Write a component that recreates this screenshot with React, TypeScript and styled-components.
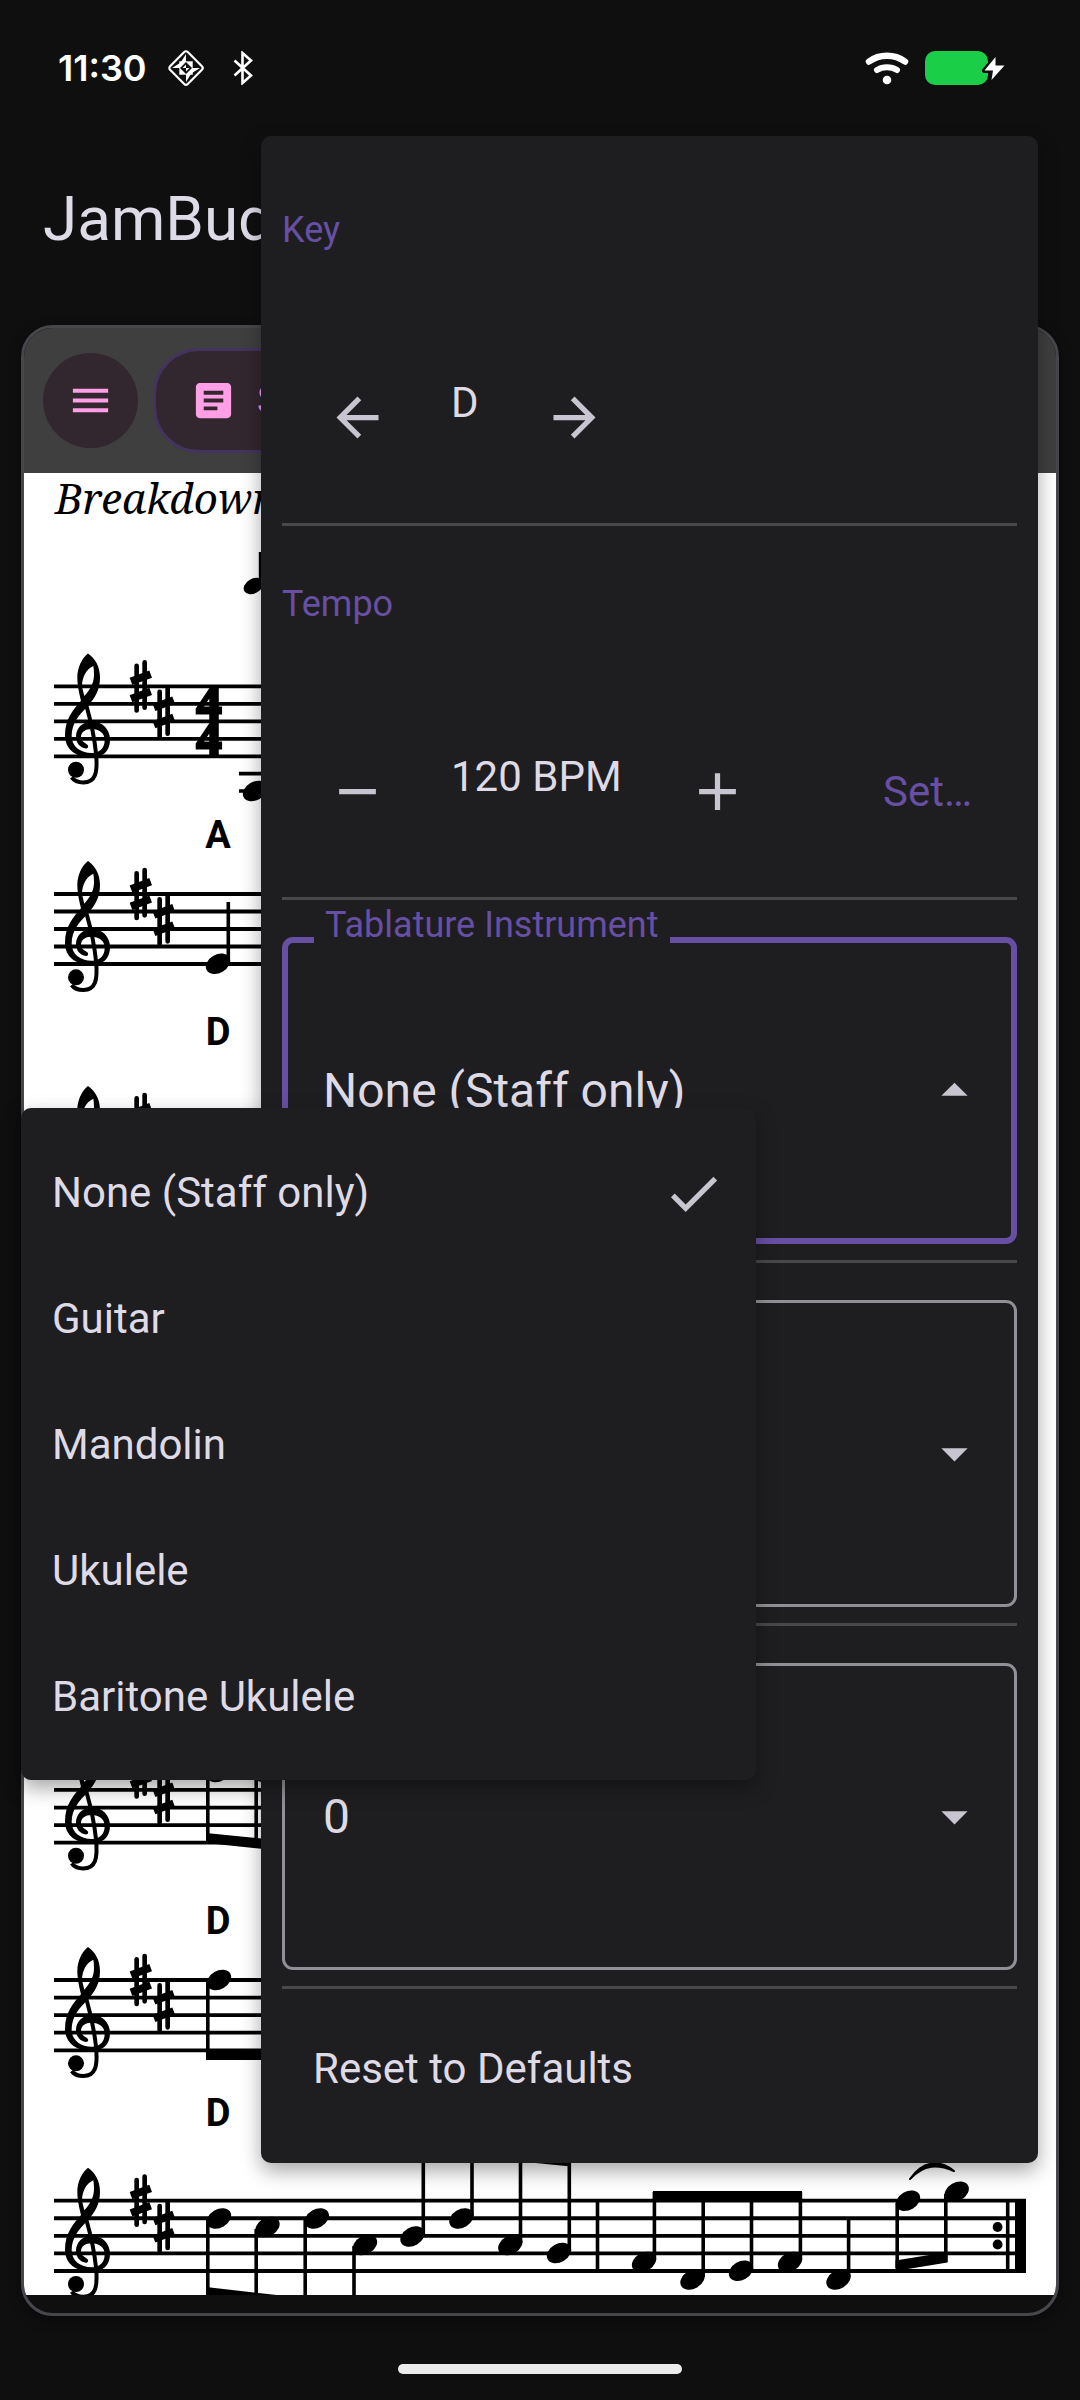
import React from "react";
import styled, { createGlobalStyle } from "styled-components";
import {
  MdAdd,
  MdArrowBack,
  MdArrowDropDown,
  MdArrowDropUp,
  MdArrowForward,
  MdArticle,
  MdCheck,
  MdMenu,
  MdRemove,
} from "react-icons/md";

const c = {
  bg: "#0f0f0f",
  surface: "#1e1e20",
  text: "#dedae6",
  icon: "#c8c5d0",
  primary: "#674fa3",
  divider: "#48484a",
  outline: "#919096",
  cardBorder: "#48464c",
  toolbar: "#3f3f3f",
  tonal: "#32272e",
  pink: "#ff9fe5",
};

const GlobalStyle = createGlobalStyle`
  *, *::before, *::after { box-sizing: border-box; }
  body { margin: 0; background: ${c.bg}; }
  button, select { font: inherit; color: inherit; margin: 0; border: 0; background: none; padding: 0; }
  h1, h2, ul { margin: 0; padding: 0; }
`;

const Screen = styled.div`
  position: relative;
  display: flex;
  flex-direction: column;
  min-height: 100vh;
  overflow: hidden;
  background: ${c.bg};
  color: ${c.text};
  font-family: Roboto, "Noto Sans", sans-serif;
  font-size: 42px;
  line-height: 50px;
`;

const StatusBar = styled.header`
  display: flex;
  align-items: center;
  justify-content: space-between;
  height: 113px;
  padding: 23px 74px 0 58px;
  color: #fff;
`;

const StatusGroup = styled.div<{ $gap: number }>`
  display: flex;
  align-items: center;
  gap: ${(p) => p.$gap}px;
`;

const Clock = styled.time`
  font-family: Inter, Roboto, sans-serif;
  font-size: 36px;
  font-weight: 600;
  margin-right: -8px;
`;

const AppBar = styled.div`
  display: flex;
  align-items: center;
  height: 212px;
  padding: 0 43px;
`;

const AppTitle = styled.h1`
  font-size: 62px;
  font-weight: 400;
  line-height: 72px;
`;

const Card = styled.main`
  margin: 0 21px;
  border: 3px solid ${c.cardBorder};
  border-radius: 32px;
  overflow: hidden;
  padding-bottom: 18px;
  box-shadow: 0 4px 12px rgba(0, 0, 0, 0.5);
`;

const Toolbar = styled.div`
  display: flex;
  align-items: center;
  gap: 15px;
  height: 145px;
  padding: 0 19px;
  background: ${c.toolbar};
  color: ${c.pink};
`;

const RoundButton = styled.button`
  display: grid;
  place-items: center;
  width: 95px;
  height: 95px;
  border-radius: 50%;
  background: ${c.tonal};
`;

const PillButton = styled.button`
  display: flex;
  align-items: center;
  gap: 20px;
  height: 105px;
  padding: 0 56px 0 34px;
  border: 3px solid #43345f;
  border-radius: 46px;
  background: ${c.tonal};
  font-size: 40px;
`;

const Paper = styled.section`
  height: 1822px;
  overflow: hidden;
  background: #fff;
  color: #000;
`;

const TuneTitle = styled.h2`
  height: 60px;
  padding-left: 31px;
  font-family: "Noto Serif", "DejaVu Serif", serif;
  font-size: 42px;
  font-style: italic;
  font-weight: 400;
  line-height: 50px;
`;

const Score = styled.svg`
  display: block;
`;

const Chord = styled.text`
  font-family: Roboto, sans-serif;
  font-size: 38px;
  font-weight: 700;
  text-anchor: middle;
`;

const Meter = styled.text`
  font-family: "Liberation Serif", serif;
  font-size: 50px;
  font-weight: 700;
  text-anchor: middle;
  stroke: #000;
  stroke-width: 3px;
`;

const HomeIndicator = styled.div`
  width: 284px;
  height: 10px;
  margin: 48px auto 26px;
  border-radius: 5px;
  background: #ebebeb;
`;

const Panel = styled.aside`
  position: absolute;
  top: 136px;
  left: 261px;
  right: 42px;
  padding: 16px 21px;
  border-radius: 10px;
  background: ${c.surface};
  box-shadow: 0 8px 20px rgba(0, 0, 0, 0.35);
`;

const Section = styled.section`
  display: flex;
  flex-direction: column;
  gap: 103px;
  padding: 57px 0 43px;
  border-bottom: 3px solid ${c.divider};
`;

const SectionTitle = styled.h2`
  color: ${c.primary};
  font-size: 36px;
  font-weight: 400;
  line-height: 42px;
`;

const Stepper = styled.div`
  display: flex;
  align-items: center;
  padding: 0 14px 0 12px;
`;

const StepButton = styled.button`
  display: grid;
  place-items: center;
  width: 126px;
  height: 126px;
  color: ${c.icon};
`;

const StepValue = styled.output`
  padding: 0 33px 29px 31px;
  white-space: nowrap;
`;

const TextButton = styled.button`
  height: 126px;
  margin-left: auto;
  padding: 2px 31px 0;
  color: ${c.primary};
`;

const FieldRow = styled.div`
  padding: 37px 0 16px;
  border-bottom: 3px solid ${c.divider};
`;

const Field = styled.div`
  position: relative;
`;

const FieldLabel = styled.label`
  position: absolute;
  left: 32px;
  bottom: calc(100% - 9px);
  padding: 0 11px;
  background: ${c.surface};
  color: ${c.primary};
  font-size: 36px;
  line-height: 42px;
`;

const FieldSelect = styled.select<{ $active?: boolean }>`
  display: block;
  width: 100%;
  height: 307px;
  padding: 0 ${(p) => (p.$active ? 35 : 38)}px;
  border: ${(p) => (p.$active ? `6px solid ${c.primary}` : `3px solid ${c.outline}`)};
  border-radius: 11px;
  appearance: none;
  color: ${c.text};
  font-size: 48px;
  opacity: 1;
`;

const FieldIcon = styled.span`
  position: absolute;
  right: 31px;
  top: 0;
  bottom: 0;
  display: flex;
  align-items: center;
  color: ${c.icon};
  pointer-events: none;
`;

const ResetButton = styled.button`
  display: block;
  width: 100%;
  height: 158px;
  padding: 2px 31px 0;
  text-align: left;
`;

const OptionMenu = styled.ul`
  position: absolute;
  top: 1108px;
  left: 21px;
  right: 324px;
  padding: 21px 0;
  border-radius: 10px;
  background: ${c.surface};
  box-shadow: 0 8px 20px rgba(0, 0, 0, 0.35);
  list-style: none;
`;

const Option = styled.button`
  display: flex;
  align-items: center;
  justify-content: space-between;
  width: 100%;
  height: 126px;
  padding: 2px 31px 0;

  svg {
    color: ${c.icon};
  }
`;

const ICON = 63;

/* Status bar glyphs */

const DiamondIcon = () => (
  <svg width="38" height="40" viewBox="0 0 38 40" fill="none" aria-hidden="true">
    <rect x="6.5" y="7.5" width="25" height="25" rx="2.5" transform="rotate(45 19 20)" stroke="#fff" strokeWidth="2.2" />
    <path
      fill="#fff"
      d="M19 6v8h-5zM19 34v-8h5zM5 20h8v-5zM33 20h-8v5zM13 14h6l-6 6zM25 14v6l-6-6zM13 26v-6l6 6zM25 26h-6l6-6zM19 16.500l-3.500 3.500H19zM19 23.500l3.500-3.500H19z"
    />
    <path d="M12.500 13.500h13v13h-13z" stroke="#fff" strokeWidth="1" opacity=".7" />
  </svg>
);

const BluetoothIcon = () => (
  <svg width="20" height="34" viewBox="0 0 20 34" fill="none" aria-hidden="true">
    <path d="M1.500 9.500 18 24.500 9.500 32V2L18 9.500 1.500 24.500" stroke="#fff" strokeWidth="2.600" />
  </svg>
);

const WifiIcon = () => (
  <svg width="44" height="34" viewBox="0 0 44 34" fill="none" aria-hidden="true">
    <path d="M4 10.500C14.500 2.800 29.500 2.800 40 10.500" stroke="#fff" strokeWidth="6.500" strokeLinecap="round" />
    <path d="M12 19C18 15.300 26 15.300 32 19" stroke="#fff" strokeWidth="6" strokeLinecap="round" />
    <circle cx="22" cy="29" r="4.300" fill="#fff" />
  </svg>
);

const BatteryIcon = () => (
  <svg width="81" height="34" viewBox="0 0 81 34" aria-hidden="true">
    <rect width="63" height="34" rx="10" fill="#1bce47" />
    <path
      d="M70.500 6 59.500 19.500h8.500L66.500 29 79.500 14.500h-9z"
      fill="#fff"
      stroke={c.bg}
      strokeWidth="5"
      strokeLinejoin="round"
      paintOrder="stroke"
    />
  </svg>
);

/* Sheet music */

const STAFF_GAP = 17.57;

const Sharp = ({ x, y }: { x: number; y: number }) => (
  <g transform={`translate(${x} ${y})`} stroke="#000" fill="none">
    <path d="M260 73V207M284 63V199" strokeWidth="14" strokeLinecap="round" />
    <path d="M243 120 302 98M243 172 302 150" strokeWidth="23" />
  </g>
);

const Clef = () => (
  <g>
    <path
      fillRule="evenodd"
      d="M114 36C96 50 82 78 82 108C82 135 89 160 93 178C70 205 45 232 45 282C45 325 80 347 120 347L150 343C170 336 180 318 180 294C180 264 158 240 126 240C98 240 78 260 78 285C78 305 90 318 108 321C115 321 117 313 111 309C101 303 93 298 93 287C93 272 106 263 124 263C148 263 164 275 164 296C164 318 152 333 128 335C92 336 65 316 65 284C65 245 88 220 112 195C135 170 150 145 150 108C150 75 135 50 114 36ZM130 74C108 84 96 108 96 136L103 164C120 145 132 125 132 100C132 88 131 80 130 74Z"
    />
    <path
      d="M107 185C118 225 130 260 138 335C144 395 136 423 100 423C85 423 72 418 65 408"
      fill="none"
      stroke="#000"
      strokeWidth="12"
    />
    <circle cx="78" cy="385" r="24" />
  </g>
);

const Staff = ({ y, gap = STAFF_GAP }: { y: number; gap?: number }) => (
  <g>
    {[0, 1, 2, 3, 4].map((i) => (
      <path key={i} d={`M54 ${y + i * gap}H1026`} stroke="#000" strokeWidth="3.800" />
    ))}
    <g transform={`translate(50 ${y - 45}) scale(.3333)`}>
      <Clef />
      <Sharp x={0} y={0} />
      <Sharp x={69} y={78} />
    </g>
  </g>
);

const Head = ({ x, y, small }: { x: number; y: number; small?: boolean }) => (
  <ellipse cx={x} cy={y} rx={small ? 10.5 : 13} ry={small ? 7.3 : 9.2} transform={`rotate(-30 ${x} ${y})`} />
);

const Stem = ({ x, from, to }: { x: number; from: number; to: number }) => (
  <path d={`M${x} ${from}V${to}`} stroke="#000" strokeWidth="3.600" />
);

const FINAL_HEADS: [number, number][] = [
  [219, 2221], [267.5, 2229.5], [316.8, 2221], [365, 2247.5], [412.5, 2239], [461.4, 2221],
  [510.3, 2247.5], [559, 2253], [644, 2262], [692.5, 2279.5], [741, 2270.7], [790, 2262],
  [838.5, 2279.5], [908, 2200.7], [956.7, 2191.7],
].map(([x, y]) => [x, x < 550 ? y - 2.5 : y]);

const FINAL_STEMS: [number, number, number][] = [
  [207.8, 2220, 2310], [256.2, 2229, 2310], [305.2, 2220, 2310], [354, 2246, 2310],
  [423.3, 2234, 2120], [472, 2216, 2120], [520.5, 2243, 2120], [569.3, 2251, 2120],
  [597.5, 2200, 2272], [654.4, 2260, 2192], [703.2, 2277, 2192], [751.5, 2269, 2192],
  [800.4, 2260, 2192], [848.6, 2277, 2218], [897.2, 2203, 2268], [945.8, 2194, 2262],
  [1007.7, 2200, 2272],
];

const SheetMusic = () => (
  <Score width="1032" height="1762" viewBox="24 533 1032 1762" role="img" aria-label="Sheet music in D">
    <Head x={253.5} y={586} small />
    <Stem x={260.6} from={584} to={552} />

    <Staff y={686.4} gap={17.5} />
    <Meter x={209} y={720}>4</Meter>
    <Meter x={209} y={755}>4</Meter>
    <path d="M239 773.600H290M239 791H290" stroke="#000" strokeWidth="3.600" />
    <Head x={255} y={791} />

    <Chord x={218} y={848}>A</Chord>
    <Staff y={894} gap={17.5} />
    <Head x={218} y={963.7} />
    <Stem x={228.3} from={962} to={902} />

    <Chord x={218} y={1045}>D</Chord>
    <Staff y={1119} gap={17.5} />

    <Staff y={1772.4} />
    <Head x={219} y={1772} />
    <Head x={267} y={1772} />
    <Stem x={207.8} from={1774} to={1840} />
    <Stem x={256.2} from={1774} to={1840} />
    <path d="M206 1833 310 1843.500V1854L206 1843Z" />

    <Chord x={218} y={1934}>D</Chord>
    <Staff y={1980} />
    <Head x={219} y={1980} />
    <Stem x={207.8} from={1982} to={2055} />
    <path d="M206 2049H310V2060H206Z" />

    <Chord x={218} y={2126}>D</Chord>
    <Staff y={2200.7} />
    {FINAL_HEADS.map(([x, y]) => (
      <Head key={x} x={x} y={y} />
    ))}
    {FINAL_STEMS.map(([x, from, to]) => (
      <Stem key={x} x={x} from={from} to={to} />
    ))}
    <path d="M206 2287 356 2304V2316H206Z" />
    <path d="M422 2142 571 2156V2166.500L422 2152Z" />
    <path d="M653 2191H802V2202H653Z" />
    <path d="M895.500 2260.500 947.500 2252V2262.500L895.500 2271Z" />
    <path
      d="M910 2179C922 2162 938 2158 954 2171C938 2164 924 2164 910 2179Z"
      stroke="#000"
      strokeWidth="2"
      strokeLinejoin="round"
    />
    <circle cx="997.600" cy="2227" r="4.900" />
    <circle cx="997.600" cy="2244.500" r="4.900" />
    <path d="M1015 2199H1026V2272.700H1015Z" />
  </Score>
);

const INSTRUMENTS = ["None (Staff only)", "Guitar", "Mandolin", "Ukulele", "Baritone Ukulele"];

export default function App() {
  const [instrument, setInstrument] = React.useState(INSTRUMENTS[0]);
  const [tempo, setTempo] = React.useState(120);

  return (
    <>
      <GlobalStyle />
      <Screen>
        <StatusBar>
          <StatusGroup $gap={28}>
            <Clock>11:30</Clock>
            <DiamondIcon />
            <BluetoothIcon />
          </StatusGroup>
          <StatusGroup $gap={16}>
            <WifiIcon />
            <BatteryIcon />
          </StatusGroup>
        </StatusBar>

        <AppBar>
          <AppTitle>JamBuddy</AppTitle>
        </AppBar>

        <Card>
          <Toolbar>
            <RoundButton aria-label="Menu">
              <MdMenu size={47} />
            </RoundButton>
            <PillButton>
              <MdArticle size={47} />
              Sheet
            </PillButton>
          </Toolbar>
          <Paper>
            <TuneTitle>Breakdown</TuneTitle>
            <SheetMusic />
          </Paper>
        </Card>

        <HomeIndicator />

        <Panel>
          <Section>
            <SectionTitle>Key</SectionTitle>
            <Stepper>
              <StepButton aria-label="Previous key">
                <MdArrowBack size={ICON} />
              </StepButton>
              <StepValue>D</StepValue>
              <StepButton aria-label="Next key">
                <MdArrowForward size={ICON} />
              </StepButton>
            </Stepper>
          </Section>

          <Section>
            <SectionTitle>Tempo</SectionTitle>
            <Stepper>
              <StepButton aria-label="Slower" onClick={() => setTempo(tempo - 1)}>
                <MdRemove size={ICON} />
              </StepButton>
              <StepValue>{tempo} BPM</StepValue>
              <StepButton aria-label="Faster" onClick={() => setTempo(tempo + 1)}>
                <MdAdd size={ICON} />
              </StepButton>
              <TextButton>Set…</TextButton>
            </Stepper>
          </Section>

          <FieldRow>
            <Field>
              <FieldSelect
                id="instrument"
                $active
                value={instrument}
                onChange={(e) => setInstrument(e.target.value)}
              >
                {INSTRUMENTS.map((name) => (
                  <option key={name}>{name}</option>
                ))}
              </FieldSelect>
              <FieldLabel htmlFor="instrument">Tablature Instrument</FieldLabel>
              <FieldIcon>
                <MdArrowDropUp size={ICON} />
              </FieldIcon>
            </Field>
          </FieldRow>

          <FieldRow>
            <Field>
              <FieldSelect aria-label="Tuning" />
              <FieldIcon>
                <MdArrowDropDown size={ICON} />
              </FieldIcon>
            </Field>
          </FieldRow>

          <FieldRow>
            <Field>
              <FieldSelect aria-label="Capo" defaultValue="0">
                <option>0</option>
              </FieldSelect>
              <FieldIcon>
                <MdArrowDropDown size={ICON} />
              </FieldIcon>
            </Field>
          </FieldRow>

          <ResetButton>Reset to Defaults</ResetButton>
        </Panel>

        <OptionMenu>
          {INSTRUMENTS.map((name) => (
            <li key={name}>
              <Option aria-pressed={name === instrument} onClick={() => setInstrument(name)}>
                {name}
                {name === instrument && <MdCheck size={ICON} />}
              </Option>
            </li>
          ))}
        </OptionMenu>
      </Screen>
    </>
  );
}
